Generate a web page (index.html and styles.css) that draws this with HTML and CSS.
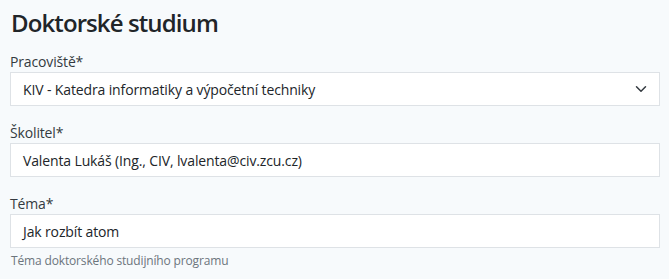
FILE: index.html
```html
<!DOCTYPE html>
<html lang="cs">
<head>
<meta charset="utf-8">
<title>Doktorské studium</title>
<link rel="stylesheet" href="styles.css">
</head>
<body>
<main class="page">
  <h1 class="title">Doktorské studium</h1>
  <div class="group">
    <label class="label">Pracoviště*</label>
    <div class="control select">
      <span>KIV - Katedra informatiky a výpočetní techniky</span>
      <svg class="chevron" width="16" height="12" viewBox="0 0 16 16"><path d="M2 5l6 6 6-6" fill="none" stroke="#343a40" stroke-width="2" stroke-linecap="round" stroke-linejoin="round"/></svg>
    </div>
  </div>
  <div class="group">
    <label class="label">Školitel*</label>
    <div class="control"><span>Valenta Lukáš (Ing., CIV, lvalenta@civ.zcu.cz)</span></div>
  </div>
  <div class="group">
    <label class="label">Téma*</label>
    <div class="control"><span>Jak rozbít atom</span></div>
    <div class="help">Téma doktorského studijního programu</div>
  </div>
</main>
</body>
</html>
```
FILE: styles.css
```css
html, body {
  margin: 0;
  padding: 0;
  background: #f7fafc;
}
body {
  font-family: "Open Sans", "Noto Sans", sans-serif;
  color: #212529;
}
.page {
  padding: 8px 9px 0 10px;
}
.title {
  margin: 0 0 14px 1px;
  font-size: 24px;
  line-height: 29px;
  font-weight: 600;
  letter-spacing: -0.9px;
  color: #212529;
}
.group {
  margin-bottom: 16px;
}
.label {
  display: block;
  font-size: 14px;
  line-height: 21px;
  letter-spacing: -0.15px;
  color: #343a40;
}
.control {
  box-sizing: border-box;
  height: 34px;
  display: flex;
  align-items: center;
  justify-content: space-between;
  padding: 0 10px 0 12px;
  background: #fff;
  border: 1px solid #dee2e6;
  font-size: 14px;
  letter-spacing: -0.13px;
  color: #212529;
}
.chevron {
  display: block;
}
.help {
  margin-top: 4px;
  font-size: 12px;
  line-height: 18px;
  letter-spacing: -0.15px;
  color: #6c757d;
  padding-left: 1px;
}
```
